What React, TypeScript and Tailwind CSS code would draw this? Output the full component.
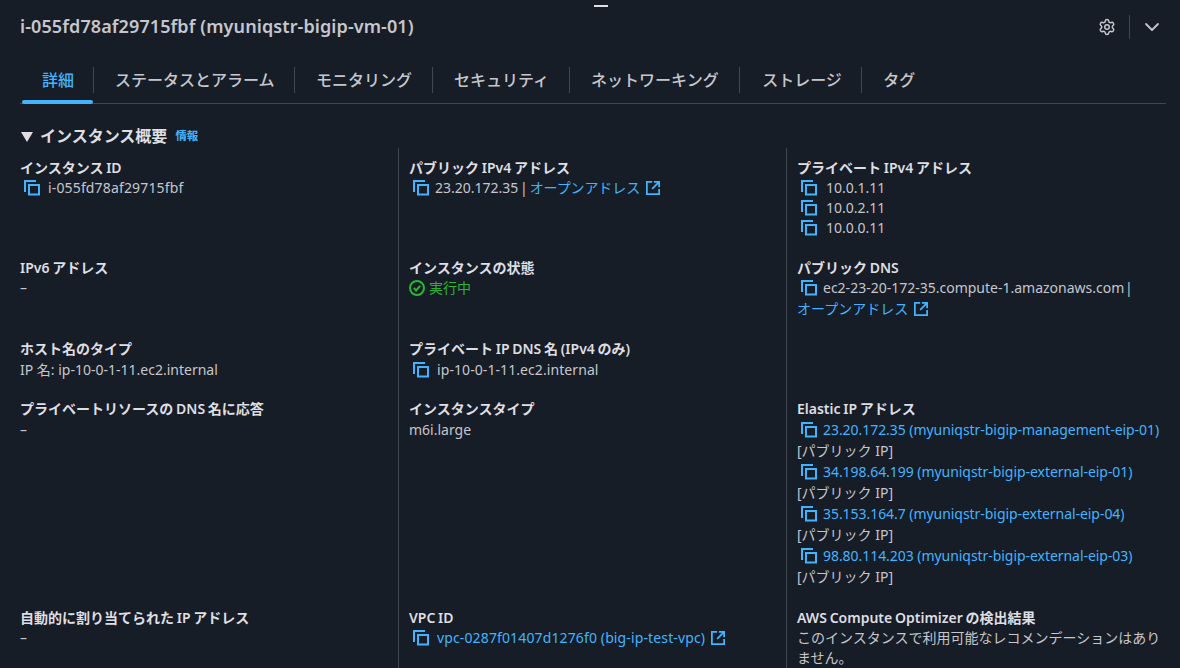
import { Settings, ChevronDown } from "lucide-react"
import type { ReactNode } from "react"

const tabs = [
  { name: "詳細", pad: "pl-5 pr-[19px]" },
  { name: "ステータスとアラーム", pad: "pl-[21px] pr-[19px]" },
  { name: "モニタリング", pad: "pl-[21.5px] pr-[19.5px]" },
  { name: "セキュリティ", pad: "pl-[21.5px] pr-[19.5px]" },
  { name: "ネットワーキング", pad: "pl-[21.5px] pr-[20.5px]" },
  { name: "ストレージ", pad: "pl-[22px] pr-[19px]" },
  { name: "タグ", pad: "pl-[21.5px] pr-[19.5px]" },
]

const eips = [
  "23.20.172.35 (myuniqstr-bigip-management-eip-01)",
  "34.198.64.199 (myuniqstr-bigip-external-eip-01)",
  "35.153.164.7 (myuniqstr-bigip-external-eip-04)",
  "98.80.114.203 (myuniqstr-bigip-external-eip-03)",
]

function CopyIcon() {
  return (
    <svg viewBox="0 0 16 16" className="w-4 h-4 shrink-0 text-[#42b4ff]" fill="none" stroke="currentColor" strokeWidth="2">
      <path d="M1 12V1h11" />
      <rect x="5" y="5" width="10" height="9.5" />
    </svg>
  )
}

function ExternalIcon() {
  return (
    <svg viewBox="0 0 16 16" className="inline-block w-[14px] h-[14px] ml-[6px] align-[-2px]" fill="none" stroke="currentColor" strokeWidth="2">
      <path d="M7 1H1v14h14V9" />
      <path d="M9 1h6v6M15 1L7 9" />
    </svg>
  )
}

function Copyable({ children }: { children: ReactNode }) {
  return (
    <div className="flex items-center h-[20px] ml-1">
      <CopyIcon />
      {children}
    </div>
  )
}

function Cell({ label, children, border = false, first = false, className = "pb-5" }: { label: string; children?: ReactNode; border?: boolean; first?: boolean; className?: string }) {
  return (
    <div className={`${border ? "border-l border-[#414750] pl-[10px]" : ""} ${first ? "pt-[10px]" : ""} ${className}`}>
      <div className="font-semibold text-[#dedee3] leading-5 [word-spacing:-0.9px]">{label}</div>
      {children}
    </div>
  )
}

export default function App() {
  return (
    <div
      className="relative w-[1180px] h-[668px] overflow-hidden bg-[#161d26] text-[#c6c6cd] text-sm pl-5 pr-[14px]"
      style={{ fontFamily: '"Noto Sans", "Noto Sans CJK JP", sans-serif' }}
    >
      <div className="absolute left-[594px] top-[5px] w-[14px] h-[2px] bg-[#dedee3]" />

      <div className="flex items-center h-[54px]">
        <h1 className="text-[18px] font-semibold tracking-[0.1px] text-[#c6c6cd]">i-055fd78af29715fbf (myuniqstr-bigip-vm-01)</h1>
        <div className="ml-auto flex items-center text-[#c6c6cd]">
          <Settings className="w-[18px] h-[18px]" strokeWidth={2} />
          <div className="w-px h-6 bg-[#414750] ml-[13px] mr-[10px]" />
          <ChevronDown className="w-6 h-6 mr-[2px]" strokeWidth={1.8} />
        </div>
      </div>

      <div className="flex items-stretch h-[50px] border-b border-[#414750] pt-[13px]">
        {tabs.map((tab, i) => (
          <div key={tab.name} className={`relative flex items-start ${i === 0 ? "ml-[2px]" : ""}`}>
            <div
              className={`h-[26px] flex items-center text-[16px] font-medium leading-none ${tab.pad} ${i === 0 ? "text-[#42b4ff]" : "text-[#c6c6cd]"} ${i < tabs.length - 1 ? "border-r border-[#414750]" : ""}`}
            >
              {tab.name}
            </div>
            {i === 0 && <div className="absolute left-0 right-px bottom-[-1px] h-1 rounded-sm bg-[#42b4ff]" />}
          </div>
        ))}
      </div>

      <div className="flex items-center h-[44px] pt-[21px]">
        <svg viewBox="0 0 12 10" className="w-3 h-[10px] ml-px mr-[7px] text-[#dedee3]" fill="currentColor">
          <path d="M0 0h12L6 10z" />
        </svg>
        <span className="text-[16px] font-semibold text-[#dedee3]">インスタンス概要</span>
        <span className="ml-[8px] text-[11.5px] font-semibold text-[#42b4ff]">情報</span>
      </div>

      <div className="grid grid-cols-[378px_388px_1fr]">
        <Cell label="インスタンス ID" first>
          <Copyable><span className="ml-2 tracking-[0.15px]">i-055fd78af29715fbf</span></Copyable>
        </Cell>
        <Cell label="パブリック IPv4 アドレス" border first>
          <Copyable>
            <span className="ml-[6px] [word-spacing:-2px]">23.20.172.35 |</span>
            <span className="ml-[2px] tracking-[-0.1px] text-[#42b4ff]">オープンアドレス<ExternalIcon /></span>
          </Copyable>
        </Cell>
        <Cell label="プライベート IPv4 アドレス" border first>
          {["10.0.1.11", "10.0.2.11", "10.0.0.11"].map((ip) => (
            <Copyable key={ip}><span className="ml-[9px]">{ip}</span></Copyable>
          ))}
        </Cell>

        <Cell label="IPv6 アドレス">
          <div className="leading-5">–</div>
        </Cell>
        <Cell label="インスタンスの状態" border>
          <div className="flex items-center h-5 text-[#2bb534]">
            <svg viewBox="0 0 16 16" className="w-4 h-4 mr-1" fill="none" stroke="currentColor" strokeWidth="2">
              <circle cx="8" cy="8" r="7" />
              <path d="M4.8 8l2.3 2.4 4-4.6" />
            </svg>
            実行中
          </div>
        </Cell>
        <Cell label="パブリック DNS" border>
          <Copyable><span className="ml-[6px] [word-spacing:-3px]">ec2-23-20-172-35.compute-1.amazonaws.com |</span></Copyable>
          <div className="mt-px leading-5 text-[#42b4ff]">オープンアドレス<ExternalIcon /></div>
        </Cell>

        <Cell label="ホスト名のタイプ" className="pb-[19px]">
          <div className="mt-px leading-5">IP 名: ip-10-0-1-11.ec2.internal</div>
        </Cell>
        <Cell label="プライベート IP DNS 名 (IPv4 のみ)" border className="pb-[19px]">
          <div className="mt-px">
            <Copyable><span className="ml-2 tracking-[0.08px]">ip-10-0-1-11.ec2.internal</span></Copyable>
          </div>
        </Cell>
        <Cell label="" border />

        <Cell label="プライベートリソースの DNS 名に応答">
          <div className="mt-px leading-5">–</div>
        </Cell>
        <Cell label="インスタンスタイプ" border>
          <div className="mt-px leading-5">m6i.large</div>
        </Cell>
        <Cell label="Elastic IP アドレス" border className="pb-[21px]">
          {eips.map((eip) => (
            <div key={eip}>
              <div className="flex items-center h-[21px] ml-1">
                <CopyIcon />
                <span className="ml-[6px] text-[#42b4ff] whitespace-nowrap tracking-[-0.05px]">{eip}</span>
              </div>
              <div className="leading-[21px]">[パブリック IP]</div>
            </div>
          ))}
        </Cell>

        <Cell label="自動的に割り当てられた IP アドレス">
          <div className="leading-5">–</div>
        </Cell>
        <Cell label="VPC ID" border>
          <Copyable>
            <span className="ml-2 text-[#42b4ff] tracking-[0.13px]">vpc-0287f01407d1276f0 (big-ip-test-vpc)<ExternalIcon /></span>
          </Copyable>
        </Cell>
        <Cell label="AWS Compute Optimizer の検出結果" border>
          <div className="leading-5">このインスタンスで利用可能なレコメンデーションはありません。</div>
        </Cell>
      </div>
    </div>
  )
}
